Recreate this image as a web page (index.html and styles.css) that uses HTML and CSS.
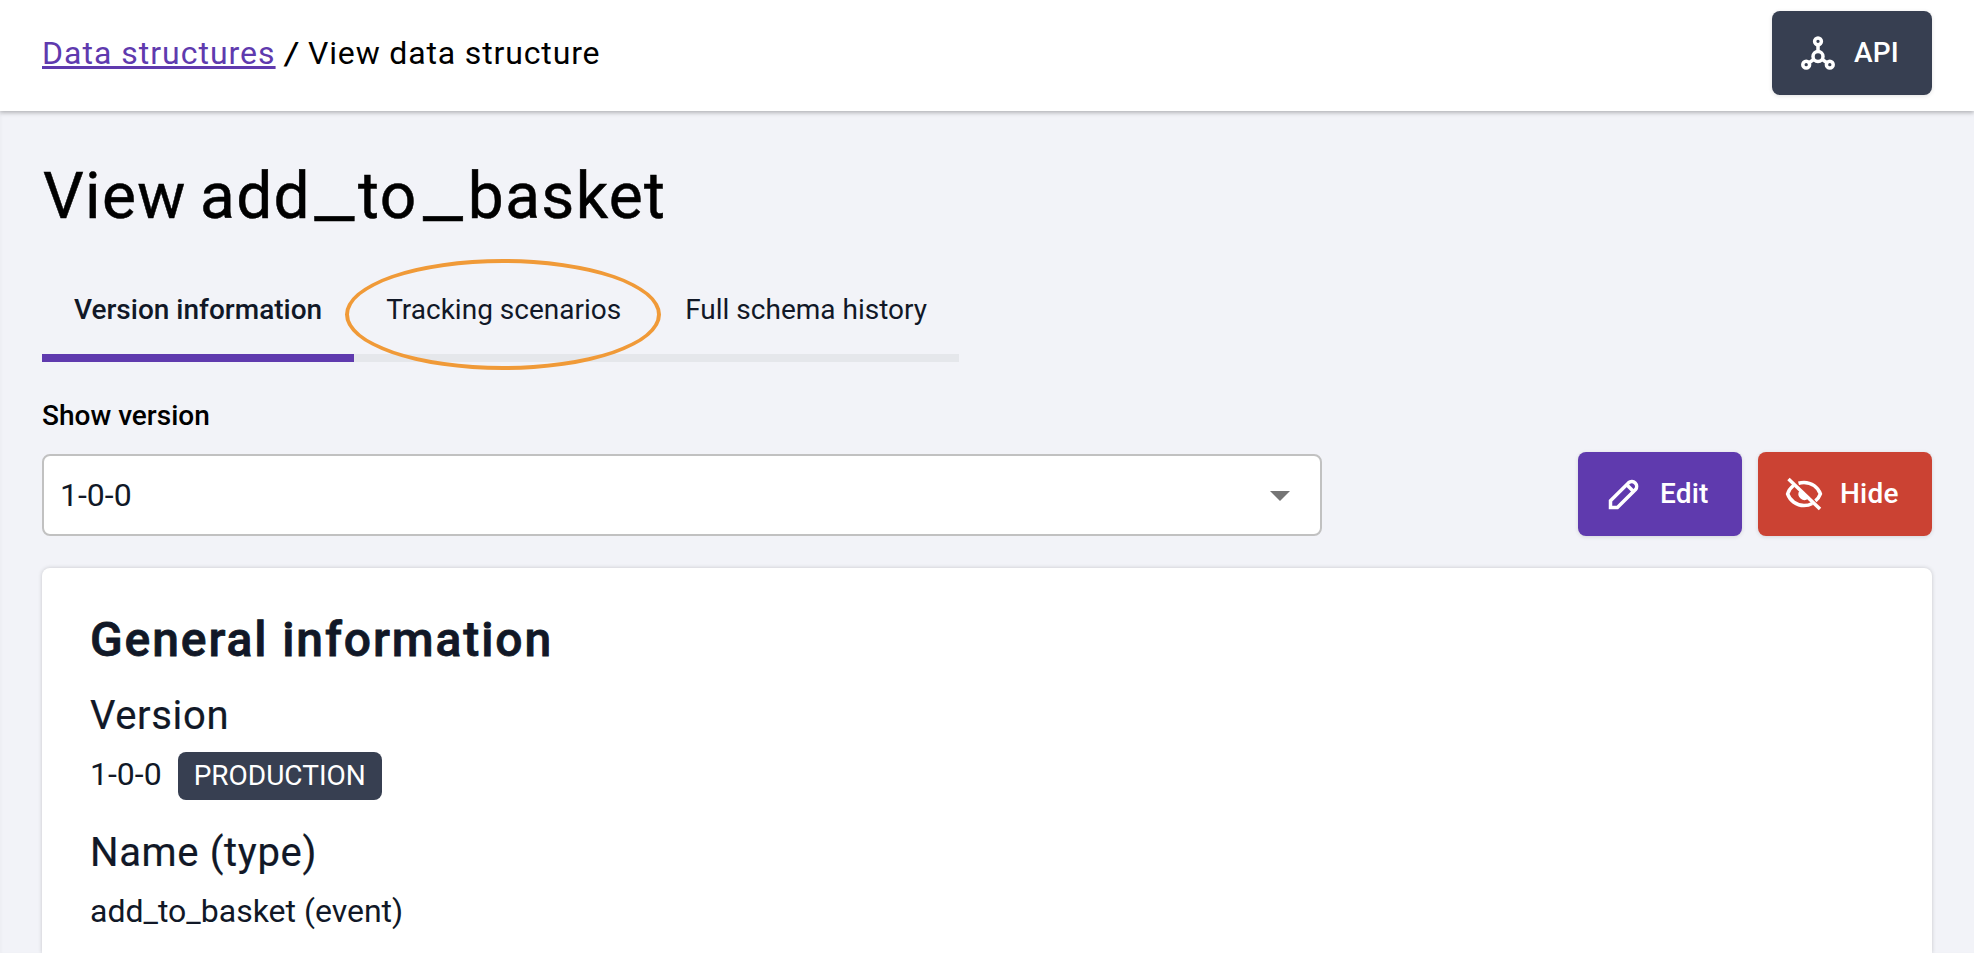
FILE: index.html
```
<!DOCTYPE html>
<html lang="en">
<head>
<meta charset="utf-8">
<title>View data structure</title>
<link rel="stylesheet" href="styles.css">
</head>
<body>
<header class="topbar">
  <nav class="breadcrumb">
    <a class="crumb-link" href="#">Data structures</a>
    <span class="crumb-sep">/</span>
    <span class="crumb-current">View data structure</span>
  </nav>
  <button class="btn btn-api">
    <svg class="icon" viewBox="0 0 38 36" width="38" height="36">
      <circle cx="18" cy="6.300" r="3.400"/>
      <circle cx="18" cy="21.500" r="5"/>
      <circle cx="6.200" cy="29.700" r="3.400"/>
      <circle cx="29.800" cy="29.700" r="3.400"/>
      <path d="M18 9.800v6.700M13.800 24.400l-4.700 3.300M22.200 24.400l4.700 3.300"/>
    </svg>
    <span class="btn-text">API</span>
  </button>
</header>
<main class="page">
  <h1 class="title"><span class="word">View add</span><span class="underscore">_</span><span class="word word-short">to</span><span class="underscore underscore-wide">_</span><span class="word">basket</span></h1>
  <div class="tabs">
    <div class="tab tab-active">Version information</div>
    <div class="tab tab-marked">Tracking scenarios<span class="marker"></span></div>
    <div class="tab">Full schema history</div>
  </div>
  <div class="label">Show version</div>
  <div class="toolbar">
    <div class="select"><span>1-0-0</span><span class="caret"></span></div>
    <div class="actions">
      <button class="btn btn-edit">
        <svg class="icon" viewBox="0 0 36 36" width="36" height="36">
          <path d="M3.500 31.500V24.800L21.600 6.700a4.900 4.900 0 0 1 6.900 6.900L10.400 31.500Z"/>
          <path d="M19.500 8.500l7 7"/>
        </svg>
        <span class="btn-text">Edit</span>
      </button>
      <button class="btn btn-hide">
        <svg class="icon" viewBox="0 0 40 38" width="40" height="38">
          <path d="M4.500 4l31.500 30"/>
          <path d="M9.500 10.500C6.600 12.800 4.500 15.800 3.600 18.900C5.900 25.600 12.500 30.500 20 30.500C23 30.500 25.800 29.800 28.200 28.400"/>
          <path d="M14.500 8.200C16.200 7.700 18 7.400 20 7.400C27.500 7.400 34.100 12.200 36.400 18.900C35.500 21.400 34 23.700 31.400 25.900"/>
          <path class="solid" d="M15.200 16L24.200 23.600A6 6 0 0 1 15.200 16Z"/>
        </svg>
        <span class="btn-text">Hide</span>
      </button>
    </div>
  </div>
  <section class="card">
    <h2 class="card-title">General information</h2>
    <h3 class="field">Version</h3>
    <p class="value value-tagged"><span>1-0-0</span><span class="badge">PRODUCTION</span></p>
    <h3 class="field">Name (type)</h3>
    <p class="value">add_to_basket (event)</p>
  </section>
</main>
</body>
</html>
```
FILE: styles.css
```
* {
  box-sizing: border-box;
  margin: 0;
}

body {
  display: flex;
  flex-direction: column;
  height: 953px;
  overflow: hidden;
  background: #f2f3f8;
  color: #111827;
  font-family: Roboto, sans-serif;
}

/* Header */
.topbar {
  position: relative;
  display: flex;
  flex: none;
  align-items: center;
  justify-content: space-between;
  height: 111px;
  padding: 11px 42px 16px;
  background: #fff;
  box-shadow: 0 2px 4px rgba(0, 0, 0, 0.25);
}

.breadcrumb {
  display: flex;
  color: #000;
  font-size: 32px;
  line-height: 38px;
}

.crumb-link {
  width: 233px;
  color: #5f3aae;
  letter-spacing: 1px;
  white-space: nowrap;
  text-decoration-thickness: 3px;
  text-underline-offset: 2px;
  text-decoration-skip-ink: none;
}

.crumb-sep {
  width: 33px;
  text-align: center;
  transform: scaleX(1.25);
}

.crumb-current {
  letter-spacing: 0.85px;
}

/* Buttons */
.btn {
  display: flex;
  align-items: center;
  gap: 16px;
  height: 84px;
  padding: 0;
  border: 0;
  border-radius: 8px;
  box-shadow: 0 1px 4px rgba(0, 0, 0, 0.12);
  color: #fff;
  font: 500 28px/33px Roboto, sans-serif;
  letter-spacing: 0.2px;
}

.btn-text {
  padding-bottom: 2px;
}

.btn-api {
  width: 160px;
  padding-left: 28px;
  background: #373f51;
}

.btn-edit {
  width: 164px;
  padding-left: 29px;
  background: #5f3aae;
}

.btn-edit .btn-text {
  padding-left: 1px;
}

.btn-hide {
  width: 174px;
  padding-left: 26px;
  background: #cb4233;
}

.icon {
  flex: none;
  fill: none;
  stroke: #fff;
  stroke-width: 3.5;
}

.solid {
  fill: #fff;
  stroke: none;
}

/* Page */
.page {
  display: flex;
  flex: 1;
  flex-direction: column;
  min-height: 0;
  padding: 48px 42px 0;
  box-shadow: inset 2px 0 2px rgba(0, 0, 0, 0.02);
}

.title {
  display: flex;
  padding-left: 1px;
  color: #000;
  font-size: 64px;
  font-weight: 400;
  line-height: 75px;
  word-spacing: -4px;
  -webkit-text-stroke: 0.5px;
}

.word {
  letter-spacing: 1.35px;
}

.word-short {
  letter-spacing: 1.5px;
}

.underscore {
  width: 47px;
  text-align: center;
  transform: translateY(-2px) scaleX(1.38);
}

.underscore-wide {
  width: 50px;
}

/* Tabs */
.tabs {
  display: flex;
  margin-top: 27px;
  font-size: 28px;
  line-height: 33px;
}

.tab {
  position: relative;
  padding: 32px 32px 28px;
  border-bottom: 8px solid #e5e7eb;
}

.tab-active {
  border-color: #5f3aae;
  font-weight: 500;
}

.marker {
  position: absolute;
  z-index: 1;
  top: -2px;
  left: -9px;
  width: 316px;
  height: 111px;
  border: 4px solid #f09a38;
  border-radius: 50%;
}

/* Version picker */
.label {
  margin-top: 37px;
  color: #000;
  font-size: 28px;
  font-weight: 500;
  line-height: 33px;
}

.toolbar {
  display: flex;
  align-items: flex-end;
  justify-content: space-between;
  margin-top: 20px;
}

.select {
  display: flex;
  align-items: center;
  justify-content: space-between;
  width: 1280px;
  height: 82px;
  padding: 0 30px 0 16px;
  border: 2px solid #c1c1c1;
  border-radius: 8px;
  background: #fff;
  font-size: 32px;
  line-height: 38px;
}

.caret {
  border: 10px solid transparent;
  border-top-color: #757575;
  border-bottom: 0;
  margin-top: 2px;
}

.actions {
  display: flex;
  gap: 16px;
}

/* Card */
.card {
  flex: 1;
  margin-top: 32px;
  padding: 43px 48px 0;
  border-radius: 8px 8px 0 0;
  background: #fff;
  box-shadow: 0 0 4px rgba(0, 0, 0, 0.18);
}

.card-title {
  font-size: 48px;
  font-weight: 500;
  letter-spacing: 1.9px;
  line-height: 57px;
  -webkit-text-stroke: 0.8px;
}

.field {
  margin-top: 29px;
  font-size: 40px;
  font-weight: 400;
  letter-spacing: 0.65px;
  line-height: 47px;
  -webkit-text-stroke: 0.2px;
}

.card-title + .field {
  margin-top: 24px;
}

.value {
  display: flex;
  align-items: flex-start;
  gap: 16px;
  margin-top: 16px;
  font-size: 32px;
  line-height: 38px;
}

.badge {
  height: 48px;
  margin-top: -3px;
  padding: 7px 16px 8px;
  border-radius: 8px;
  background: #373f51;
  color: #fff;
  font-size: 28px;
  line-height: 33px;
}
```
